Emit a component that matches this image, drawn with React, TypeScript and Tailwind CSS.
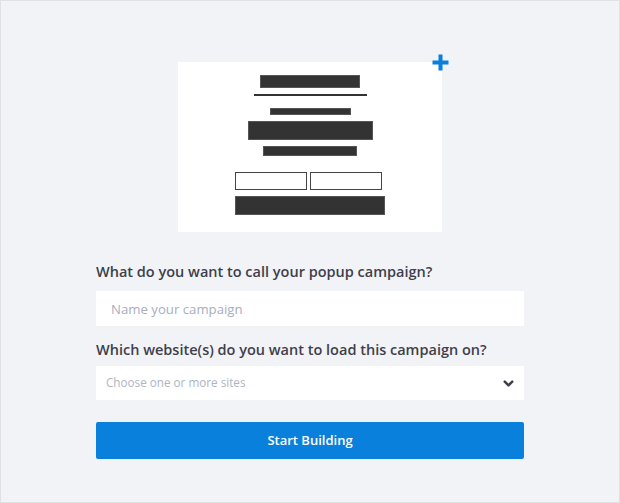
import { ChevronDown } from 'lucide-react'

function PopupPreview() {
  return (
    <div className="relative mx-auto h-[170px] w-[264px] bg-white">
      {/* plus badge */}
      <svg
        className="absolute -right-[8px] -top-[9px] h-[19px] w-[19px]"
        viewBox="0 0 19 19"
        fill="none"
      >
        <path d="M9.5 1.5v16M1.5 9.5h16" stroke="#0a7fdc" strokeWidth="4" />
      </svg>

      <div className="flex flex-col items-center pt-[13px]">
        <div className="h-[13px] w-[100px] border border-[#555] bg-[#333]" />
        <div className="mt-[6px] h-[2px] w-[113px] bg-[#333]" />
        <div className="mt-[12px] h-[7px] w-[81px] border border-[#555] bg-[#333]" />
        <div className="mt-[6px] h-[19px] w-[125px] border border-[#555] bg-[#333]" />
        <div className="mt-[6px] h-[10px] w-[94px] border border-[#555] bg-[#333]" />
        <div className="mr-[3px] mt-[16px] flex gap-[3px]">
          <div className="h-[18px] w-[72px] border border-[#444] bg-white" />
          <div className="h-[18px] w-[72px] border border-[#444] bg-white" />
        </div>
        <div className="mt-[6px] h-[19px] w-[150px] border border-[#555] bg-[#333]" />
      </div>
    </div>
  )
}

export default function App() {
  return (
    <div
      className="h-[503px] w-[620px] border border-[#e0e1e4] bg-[#f2f3f7]"
      style={{ fontFamily: '"Open Sans", "Liberation Sans", sans-serif' }}
    >
      <div className="pt-[61px]">
        <PopupPreview />
      </div>

      <div className="mx-auto mt-[29px] w-[428px]">
        <label className="block text-[14.5px] font-semibold leading-[22px] text-[#3e3f4b]">
          What do you want to call your popup campaign?
        </label>
        <input
          type="text"
          placeholder="Name your campaign"
          className="mt-[8px] h-[35px] w-full bg-white px-[15px] text-[13.2px] text-[#3e3f4b] outline-none placeholder:text-[#a9aebf]"
        />

        <label className="mt-[13px] block text-[14.5px] font-semibold leading-[22px] text-[#3e3f4b]">
          Which website(s) do you want to load this campaign on?
        </label>
        <div className="mt-[5px] flex h-[34px] w-full items-center justify-between bg-white pl-[10px] pr-[8px]">
          <span className="text-[11.7px] text-[#b0b4c2]">Choose one or more sites</span>
          <ChevronDown className="h-[15px] w-[15px] text-[#3e3f4b]" strokeWidth={4} />
        </div>

        <button
          type="button"
          className="mt-[22px] flex h-[37px] w-full items-center justify-center rounded-[2px] bg-[#0a80dd] text-[13px] font-semibold text-white"
        >
          Start Building
        </button>
      </div>
    </div>
  )
}
